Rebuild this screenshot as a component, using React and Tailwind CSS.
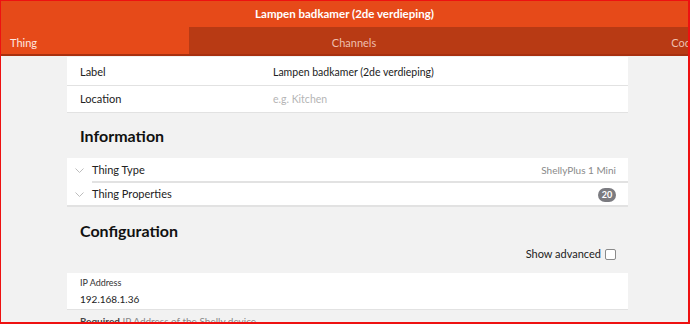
export default function App() {
  return (
    <div className="w-[690px] h-[324px] overflow-hidden border-t border-l border-r-2 border-b-2 border-[#ee1111] bg-[#f2f2f2] flex flex-col" style={{ fontFamily: 'Lato, sans-serif' }}>
      <div className="h-[26px] shrink-0 bg-[#e64a19] flex items-center justify-center text-white text-[11.5px] font-bold">
        Lampen badkamer (2de verdieping)
      </div>
      <div className="h-[29px] shrink-0 flex bg-[#e64a19] text-[11px] border-b-2 border-[#a8300f]">
        <div className="w-[188px] shrink-0 flex items-center pt-[5px] pl-[9px] text-[#fde8e0]">Thing</div>
        <div className="w-[330px] shrink-0 flex items-center pt-[5px] justify-center bg-[#b83a14] text-[#eebfae]">Channels</div>
        <div className="w-[330px] shrink-0 flex items-center pt-[5px] justify-center bg-[#b83a14] text-[#eebfae]">Code</div>
      </div>
      <div className="flex-1 pt-[1px] pl-[66px]">
        <div className="w-[561px]">
          <div className="bg-white text-[11px] text-[#222]">
            <div className="h-[29px] flex items-center pt-[3px] border-b border-[#e2e2e2]">
              <div className="w-[206px] pl-[13px]">Label</div>
              <div className="text-[10.5px]">Lampen badkamer (2de verdieping)</div>
            </div>
            <div className="h-[27px] flex items-center pt-[1px] border-b border-[#e2e2e2]">
              <div className="w-[206px] pl-[13px]">Location</div>
              <div className="text-[10.5px] text-[#b5b5b5]">e.g. Kitchen</div>
            </div>
          </div>
          <div className="h-[45px] flex items-center pt-[1px] pl-[13px] text-[16px] font-bold text-[#111]">Information</div>
          <div className="bg-white text-[11px] text-[#222]">
            <div className="h-[25px] flex items-center">
              <Chev />
              <div className="flex-1 h-full flex items-center pt-[1px] border-b-2 border-[#e2e2e2] pr-[12px]">
                <div className="flex-1">Thing Type</div>
                <div className="text-[#8a8a8a] text-[10px]">ShellyPlus 1 Mini</div>
              </div>
            </div>
            <div className="h-[24px] flex items-center pt-[1px] border-b-2 border-[#e2e2e2]">
              <Chev />
              <div className="flex-1 flex items-center pr-[12px]">
                <div className="flex-1">Thing Properties</div>
                <div className="h-[14px] w-[18px] rounded-full bg-[#7b7b80] text-white text-[9px] font-bold flex items-center justify-center">20</div>
              </div>
            </div>
          </div>
          <div className="h-[38px] pt-[12px] pl-[13px] text-[16px] leading-[24px] font-bold text-[#111]">Configuration</div>
          <div className="h-[18px] flex items-center justify-end pr-[12px] text-[11px] text-[#222] gap-[4px]">
            Show advanced
            <span className="w-[11px] h-[11px] border border-[#8a8a8a] rounded-[2px] bg-white"></span>
          </div>
          <div className="mt-[10px] bg-white border-b border-[#e2e2e2] h-[37px] pl-[13px] pt-[2px]">
            <div className="text-[9px] text-[#333] leading-[16px]">IP Address</div>
            <div className="text-[10px] text-[#222] leading-[16px]">192.168.1.36</div>
          </div>
          <div className="pl-[13px] pt-[4px] text-[10px] leading-[14px] text-[#888]">
            <span className="font-bold text-[#444]">Required</span> IP Address of the Shelly device
          </div>
        </div>
      </div>
    </div>
  );
}

function Chev() {
  return (
    <div className="w-[25px] shrink-0 flex justify-center">
      <svg width="9" height="6" viewBox="0 0 9 6" fill="none" stroke="#bdbdbd" strokeWidth="1">
        <path d="M0.5 0.5 L4.5 4.5 L8.5 0.5" />
      </svg>
    </div>
  );
}
